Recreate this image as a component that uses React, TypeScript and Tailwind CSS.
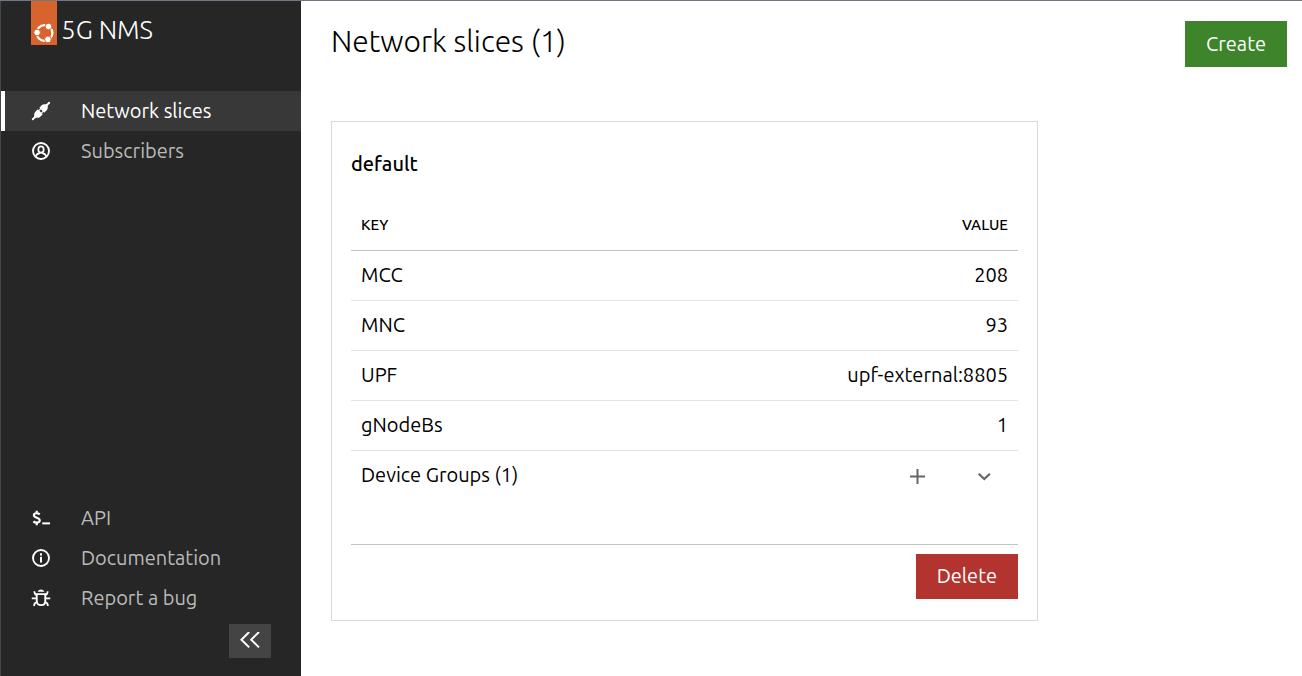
import type { ReactNode } from "react";

function Icon({ children }: { children: ReactNode }) {
  return (
    <svg viewBox="0 0 16 16" className="size-5 shrink-0" fill="none" stroke="#fff" strokeWidth="1.5" aria-hidden="true">
      {children}
    </svg>
  );
}

const ConnectedIcon = () => (
  <Icon>
    <g transform="rotate(-45 8 8)">
      <path d="M-1.300 8H2M14 8h3.300" strokeWidth="1.500" strokeLinecap="round" />
      <path d="M7.200 5.200v5.600H4.400C2.900 10.800 1.700 9.600.6 8 1.700 6.400 2.900 5.200 4.400 5.200Z" fill="#fff" stroke="none" />
      <path d="M8.900 5.200v5.600h2.700c1.500 0 2.700-1.200 3.800-2.800-1.100-1.600-2.300-2.800-3.800-2.800Z" fill="#fff" stroke="none" />
      <path d="M7 6.600h2M7 9.400h2" strokeWidth=".9" />
    </g>
  </Icon>
);

const UserIcon = () => (
  <Icon>
    <circle cx="8" cy="8" r="6.4" strokeWidth="1.5" />
    <rect x="5.900" y="4.300" width="4.200" height="5" rx="2.100" strokeWidth="1.400" />
    <path d="M3.900 12.300c.4-1.800 1.400-2.300 3-2.600V9M12.100 12.300c-.4-1.800-1.400-2.300-3-2.600V9" strokeWidth="1.400" />
  </Icon>
);

const TerminalIcon = () => (
  <Icon>
    <path d="M7 5.100C6.200 4.400 5.300 4.200 4.300 4.200c-1.200 0-2 .6-2 1.600 0 2.500 4.700 1.500 4.700 4.100 0 1.200-1 1.800-2.300 1.800-1 0-2.100-.3-2.800-1M4.600 2.200v2M4.600 11.700v2" strokeWidth="1.700" />
    <path d="M9 12.300h6.200" strokeWidth="1.600" />
  </Icon>
);

const InfoIcon = () => (
  <Icon>
    <circle cx="8" cy="8" r="6.400" />
    <path d="M8 7v4.600M8 4.200v1.700" strokeWidth="1.600" />
  </Icon>
);

const BugIcon = () => (
  <Icon>
    <path d="M5.300 2.900C5.800 1.700 6.800 1.100 8 1.100s2.200.6 2.700 1.800Z" fill="#fff" stroke="none" />
    <path d="M4.600 4.900h6.800v5.400c0 2.200-1.500 3.400-3.400 3.400s-3.400-1.200-3.400-3.400Z" />
    <path d="M4.600 5.600C3.200 5.400 2.700 4.500 2.700 2.600M11.400 5.600c1.400-.2 1.900-1.100 1.900-3M.6 8.200h4M11.400 8.200h4M2.500 14.300c0-2 .8-2.800 2.400-3M13.500 14.300c0-2-.8-2.800-2.400-3" strokeWidth="1.400" />
  </Icon>
);

function NavItem({ icon, label, active = false }: { icon: ReactNode; label: string; active?: boolean }) {
  return (
    <li>
      <a
        href="#"
        aria-current={active ? "page" : undefined}
        className={
          active
            ? "flex h-10 items-center gap-[30px] border-l-4 border-white bg-[#383838] pl-[26px] text-white"
            : "flex h-10 items-center gap-[30px] border-l-4 border-transparent pl-[26px] text-[#bababa]"
        }
      >
        {icon}
        {label}
      </a>
    </li>
  );
}

const rows = [
  ["MCC", "208"],
  ["MNC", "93"],
  ["UPF", "upf-external:8805"],
  ["gNodeBs", "1"],
];

export default function App() {
  return (
    <div className="flex min-h-screen border-t border-[#6f7782] bg-white font-['Ubuntu','Noto_Sans',sans-serif] text-xl leading-6 text-black">
      <aside className="flex w-[301px] shrink-0 flex-col border-l border-[#42494e] bg-[#262626]">
        <a href="#" className="flex h-11 items-start gap-1 pl-[30px] text-white">
          <svg viewBox="0 0 26 44" className="h-11 w-[26px]" aria-hidden="true">
            <path fill="#d8642d" d="M0 0h26v44H0z" />
            <circle cx="13.500" cy="32" r="7.900" fill="none" stroke="#fff" strokeWidth="2.200" />
            <g fill="#fff" stroke="#d8642d" strokeWidth="1">
              <circle cx="6.100" cy="31.500" r="3.300" />
              <circle cx="17.500" cy="25.500" r="3.300" />
              <circle cx="16.900" cy="38.400" r="3.300" />
            </g>
          </svg>
          <span className="pt-[13px] text-[26px] leading-8 font-light">5G NMS</span>
        </a>
        <nav aria-label="Main" className="flex grow flex-col pt-[46px]">
          <ul>
            <NavItem icon={<ConnectedIcon />} label="Network slices" active />
            <NavItem icon={<UserIcon />} label="Subscribers" />
          </ul>
          <ul className="mt-auto">
            <NavItem icon={<TerminalIcon />} label="API" />
            <NavItem icon={<InfoIcon />} label="Documentation" />
            <NavItem icon={<BugIcon />} label="Report a bug" />
          </ul>
        </nav>
        <button type="button" aria-label="Collapse navigation" className="mt-1.5 mr-[30px] mb-[18px] flex h-[34px] w-[42px] items-center justify-center self-end bg-[#444]">
          <svg viewBox="0 0 20 18" className="h-[18px] w-5" fill="none" stroke="#fff" strokeWidth="2" aria-hidden="true">
            <path d="M9.200 0 1.400 7.700l7.800 7.700M19 0l-7.800 7.700 7.800 7.700" />
          </svg>
        </button>
      </aside>

      <main className="min-w-0 grow pt-5 pr-[15px] pb-10 pl-[30px]">
        <header className="flex items-start justify-between">
          <h1 className="text-3xl leading-10 font-light">Network slices (1)</h1>
          <button type="button" className="h-[46px] bg-[#3d842b] px-[21px] text-white">
            Create
          </button>
        </header>

        <section className="mt-[54px] w-full max-w-[707px] border border-[#d9d9d9] px-[19px] pt-[30px] pb-[21px]">
          <h2 className="font-medium">default</h2>
          <table className="mt-6 w-full border-collapse">
            <thead>
              <tr className="h-[50px] border-b border-[#c4c4c4] text-[15px]">
                <th scope="col" className="px-2.5 text-left font-medium">KEY</th>
                <th scope="col" className="px-2.5 text-right font-medium">VALUE</th>
              </tr>
            </thead>
            <tbody>
              {rows.map(([key, value]) => (
                <tr key={key} className="h-[50px] border-b border-[#e3e3e3]">
                  <td className="px-2.5">{key}</td>
                  <td className="px-2.5 text-right">{value}</td>
                </tr>
              ))}
              <tr className="h-[94px] border-b border-[#c4c4c4] align-top">
                <td className="px-2.5 pt-3">Device Groups (1)</td>
                <td className="pt-4 pr-[25px]">
                  <div className="flex justify-end gap-[49px]">
                    <button type="button" aria-label="Add device group">
                      <svg viewBox="0 0 18 18" className="size-[18px]" fill="none" stroke="#666" strokeWidth="2" aria-hidden="true">
                        <path d="M9.500 2v15M2 9.500h15" />
                      </svg>
                    </button>
                    <button type="button" aria-label="Expand device groups">
                      <svg viewBox="0 0 18 18" className="size-[18px]" fill="none" stroke="#666" strokeWidth="2.200" aria-hidden="true">
                        <path d="m3.700 6.700 5.600 5.300 5.600-5.300" />
                      </svg>
                    </button>
                  </div>
                </td>
              </tr>
            </tbody>
          </table>
          <div className="mt-[9px] flex justify-end">
            <button type="button" className="h-[45px] bg-[#b3332e] px-[21px] text-white">
              Delete
            </button>
          </div>
        </section>
      </main>
    </div>
  );
}
